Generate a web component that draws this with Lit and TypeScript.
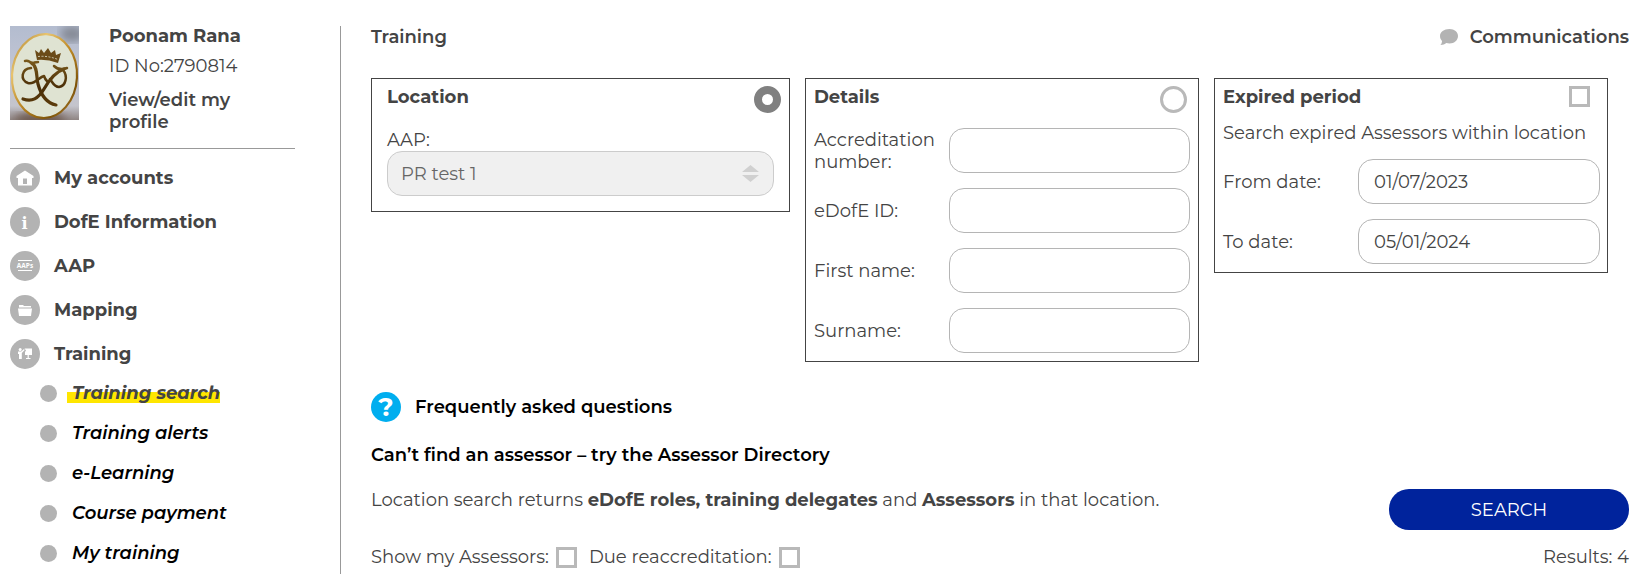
import { LitElement, html, css, svg } from "lit";
import { customElement, state } from "lit/decorators.js";

const sharedStyles = css`
  *,
  *::before,
  *::after {
    box-sizing: border-box;
  }
  a {
    color: inherit;
    text-decoration: none;
  }
  a:hover {
    text-decoration: underline;
  }
  h1,
  h2,
  p,
  ul {
    margin: 0;
    padding: 0;
  }
  ul {
    list-style: none;
  }
`;

const navIcons = {
  home: svg`<path d="M15 7.500 L23.500 13 V15 H22 V22.500 H8 V15 H6.500 V13 Z" fill="#fff" /><path d="M13 15.500h4v5.500h-4z" fill="#b3b3b3" />`,
  info: svg`<text x="14.500" y="21.500" text-anchor="middle" font-family="DejaVu Serif, serif" font-weight="700" font-size="16" fill="#fff">i</text>`,
  aap: svg`<path d="M8 9.500h14M8 19.500h14" stroke="#fff" stroke-width="1" /><text x="15" y="17.300" text-anchor="middle" font-family="Open Sans, sans-serif" font-weight="700" font-size="6.500" fill="#fff">AAPs</text>`,
  folder: svg`<path d="M9 10h4l1 1h7v1.500H9z" fill="#fff" /><path d="M8 13.500h14l-1 7.500H9z" fill="#fff" />`,
  training: svg`<circle cx="10.200" cy="10.600" r="1.500" fill="#fff" /><path d="M8 12.600h3.200l2.800-2.600 .7.900-2.900 3.100V20H9v-5H8z" fill="#fff" /><path d="M14.500 9.500h7.500v6.500h-3.200v3h1.700v1h-4.500v-1h1.600v-3h-2.600v-3l1-1.500z" fill="#fff" />`,
};

@customElement("side-nav")
class SideNav extends LitElement {
  static styles = [
    sharedStyles,
    css`
      :host {
        display: block;
        padding-right: 45px;
        border-right: 1px solid #999;
      }
      .profile {
        display: grid;
        grid-template-columns: 69px 1fr;
        column-gap: 30px;
        padding-bottom: 15px;
        border-bottom: 1px solid #999;
      }
      .photo {
        display: block;
        width: 69px;
        height: 94px;
      }
      .who {
        display: flex;
        flex-direction: column;
        padding-right: 50px;
      }
      .name {
        line-height: 20px;
        font-weight: 700;
      }
      .idno {
        padding: 10px 0 13px;
        line-height: 20px;
      }
      .edit {
        line-height: 22px;
        font-weight: 600;
      }
      .sections {
        display: grid;
        gap: 14px;
        padding-top: 14px;
      }
      .section {
        display: flex;
        align-items: center;
        gap: 14px;
        height: 30px;
        font-weight: 700;
      }
      .icon {
        display: block;
        width: 30px;
        height: 30px;
      }
      .pages {
        display: grid;
        gap: 16px;
        padding: 12px 0 0 30px;
        color: #000;
        font-weight: 600;
        font-style: italic;
      }
      .page {
        display: flex;
        align-items: center;
        gap: 10px;
        height: 24px;
      }
      .page::before {
        content: "";
        width: 17px;
        height: 17px;
        border-radius: 50%;
        background: #b3b3b3;
      }
      .page a {
        padding-left: 5px;
        line-height: 24px;
      }
      .page .current {
        color: #444;
        font-weight: 700;
        background: linear-gradient(#ffe600, #ffe600) 0 11px / 100% 11px no-repeat;
      }
    `,
  ];

  private sections = [
    { label: "My accounts", icon: navIcons.home },
    { label: "DofE Information", icon: navIcons.info },
    { label: "AAP", icon: navIcons.aap },
    { label: "Mapping", icon: navIcons.folder },
    { label: "Training", icon: navIcons.training },
  ];

  private pages = ["Training search", "Training alerts", "e-Learning", "Course payment", "My training"];

  private photo() {
    return html`<svg class="photo" viewBox="0 0 69 94" role="img" aria-label="Profile picture">
      <defs>
        <linearGradient id="backdrop" x1="0" y1="0" x2="0" y2="1">
          <stop offset="0" stop-color="#b3bccf" />
          <stop offset="0.5" stop-color="#c3c6d4" />
          <stop offset="0.85" stop-color="#c4c4cc" />
          <stop offset="1" stop-color="#8f8583" />
        </linearGradient>
        <linearGradient id="rim" x1="0" y1="0" x2="1" y2="1">
          <stop offset="0" stop-color="#a87a20" />
          <stop offset="0.25" stop-color="#e8c470" />
          <stop offset="0.5" stop-color="#c08c28" />
          <stop offset="0.8" stop-color="#7d5208" />
          <stop offset="1" stop-color="#c9983c" />
        </linearGradient>
        <linearGradient id="ink" gradientUnits="userSpaceOnUse" x1="0" y1="34" x2="0" y2="80">
          <stop offset="0" stop-color="#7a5a1c" />
          <stop offset="0.6" stop-color="#4a2e08" />
          <stop offset="1" stop-color="#5c3c0c" />
        </linearGradient>
        <filter id="soft"><feGaussianBlur stdDeviation="4" /></filter>
      </defs>
      <rect width="69" height="94" fill="url(#backdrop)" />
      <ellipse cx="62" cy="8" rx="12" ry="8" fill="#858a96" filter="url(#soft)" />
      <ellipse cx="30" cy="93" rx="26" ry="6" fill="#6b554a" filter="url(#soft)" />
      <g transform="rotate(3 34 50)">
        <ellipse cx="34.500" cy="50" rx="32.500" ry="42" fill="#dfe3d2" stroke="url(#rim)" stroke-width="2.200" />
      </g>
      <path d="M27 34 L25 24 L29 27 L31 23 L34 27 L38 22 L41 27 L45 24 L46 29 L51 27 L48 37 Q37 33 27 34Z" fill="#6b4b18" />
      <path d="M28 30.500q10-1 20 3" fill="none" stroke="#dfe3d2" stroke-width="0.800" stroke-dasharray="2 1.500" />
      <g fill="none" stroke="url(#ink)" stroke-linecap="round" stroke-linejoin="round">
        <path d="M15 35 Q19 34 22 38 Q24 36 28 36" stroke-width="2.500" />
        <path d="M22 37 C28 42 26 50 28 58 C31 69 36 77 46 79" stroke-width="3.200" />
        <path d="M21 42 C11 43 10 54 18 57 C25 59 29 51 34 50 Q35 53 37 55" stroke-width="2.500" />
        <path d="M44 40 Q49 45 57 42" stroke-width="2.500" />
        <path d="M54 43 C45 46 38 56 34 63 C28 73 22 76 13 73" stroke-width="3.200" />
        <path d="M53 44 C58 50 56 60 49 61 C44 61 43 57 40 53" stroke-width="2.500" />
      </g>
    </svg>`;
  }

  render() {
    return html`
      <div class="profile">
        ${this.photo()}
        <div class="who">
          <span class="name">Poonam Rana</span>
          <span class="idno">ID No:2790814</span>
          <a class="edit" href="#profile">View/edit my profile</a>
        </div>
      </div>
      <nav aria-label="Main">
        <ul class="sections">
          ${this.sections.map(
            (s) => html`<li>
              <a class="section" href="#">
                <svg class="icon" viewBox="0 0 30 30" aria-hidden="true">
                  <circle cx="15" cy="15" r="15" fill="#b3b3b3" />
                  ${s.icon}
                </svg>
                ${s.label}
              </a>
            </li>`
          )}
        </ul>
        <ul class="pages">
          ${this.pages.map(
            (p, i) => html`<li class="page"><a class=${i === 0 ? "current" : ""} href="#">${p}</a></li>`
          )}
        </ul>
      </nav>
    `;
  }
}

@customElement("training-search")
class TrainingSearch extends LitElement {
  static styles = [
    sharedStyles,
    css`
      :host {
        display: block;
        padding-left: 30px;
      }
      .top {
        display: flex;
        justify-content: space-between;
        align-items: center;
        height: 22px;
      }
      .heading {
        font-size: inherit;
        font-weight: 600;
      }
      .comms {
        display: flex;
        align-items: center;
        gap: 12px;
        font-weight: 600;
      }
      .bubble {
        width: 18px;
        height: 16px;
      }
      .panels {
        display: grid;
        grid-template-columns: 419fr 394fr 394fr;
        align-items: start;
        gap: 15px;
        padding: 30px 21px 30px 0;
      }
      .panel {
        padding: 7px 8px 8px;
        border: 1px solid #444;
      }
      .location {
        padding: 7px 15px 15px;
      }
      .location .bar {
        margin-right: -7px;
      }
      .bar {
        display: flex;
        justify-content: space-between;
        align-items: flex-start;
        height: 42px;
      }
      .details .bar {
        padding-right: 3px;
      }
      .expired {
        padding-right: 7px;
      }
      .expired .bar {
        height: 34px;
        padding-right: 10px;
      }
      .title {
        font-size: inherit;
        line-height: 22px;
        font-weight: 700;
      }
      .radio,
      .check {
        appearance: none;
        flex: none;
        margin: 0;
        border: 3px solid #b9b9b9;
        background: #fff;
      }
      .radio {
        width: 27px;
        height: 27px;
        border-radius: 50%;
      }
      .radio:checked {
        border: 8px solid #808080;
      }
      .check {
        width: 21px;
        height: 21px;
      }
      .check:checked {
        background: #808080;
      }
      .aap-label {
        display: block;
        padding-top: 1px;
        line-height: 22px;
      }
      .picker {
        display: grid;
        align-items: center;
      }
      .picker > * {
        grid-area: 1 / 1;
      }
      .select,
      .input {
        width: 100%;
        min-width: 0;
        height: 45px;
        border: 1px solid #b5b5b5;
        border-radius: 15px;
        background: #fff;
        color: #444;
        font: inherit;
        padding: 0 15px;
      }
      .select {
        appearance: none;
        padding: 0 13px;
        border-color: #ccc;
        background: #f0f0f0;
        color: #666;
        opacity: 1;
      }
      .arrows {
        justify-self: end;
        width: 17px;
        height: 17px;
        margin-right: 15px;
        pointer-events: none;
      }
      .rows {
        display: grid;
        gap: 15px;
      }
      .row {
        display: grid;
        grid-template-columns: 135px 1fr;
        align-items: center;
        line-height: 22px;
      }
      .note {
        padding: 2px 0 15px;
        line-height: 22px;
      }
      .strong {
        display: flex;
        align-items: center;
        gap: 14px;
        color: #000;
        font-weight: 600;
      }
      .faq {
        width: 30px;
        height: 30px;
      }
      .directory {
        padding-top: 22px;
        line-height: 22px;
      }
      .footer {
        display: grid;
        grid-template-columns: 1fr auto;
        grid-template-rows: 41px auto;
        row-gap: 16px;
        padding-top: 23px;
      }
      .summary {
        line-height: 22px;
      }
      .summary b {
        font-weight: 700;
      }
      .search {
        width: 240px;
        height: 41px;
        border: 0;
        border-radius: 20px;
        background: #00239c;
        color: #fff;
        font: inherit;
      }
      .filters {
        display: flex;
        align-items: center;
        gap: 12px;
        line-height: 22px;
      }
      .filter {
        display: flex;
        align-items: center;
        gap: 7px;
      }
      .results {
        justify-self: end;
        line-height: 22px;
      }
    `,
  ];

  @state() private mode = "location";

  private details = ["Accreditation number:", "eDofE ID:", "First name:", "Surname:"];

  private dates = [
    { label: "From date:", value: "01/07/2023" },
    { label: "To date:", value: "05/01/2024" },
  ];

  private modeRadio(value: string, label: string) {
    return html`<input
      class="radio"
      type="radio"
      name="mode"
      aria-label=${label}
      .checked=${this.mode === value}
      @change=${() => (this.mode = value)}
    />`;
  }

  render() {
    return html`
      <header class="top">
        <h1 class="heading">Training</h1>
        <a class="comms" href="#communications">
          <svg class="bubble" viewBox="0 0 18 16" aria-hidden="true">
            <path d="M9.500 0C14.500 0 18 3 18 7s-3.500 7.500-8.500 7.500c-1.200 0-2.200-.2-3.200-.5C5 15.300 3 16 .300 16 1.500 15 2 13.500 2 12 .700 10.500 0 9 0 7 0 3 4 0 9.500 0z" fill="#b3b3b3" />
          </svg>
          Communications
        </a>
      </header>
      <div class="panels">
        <section class="panel location">
          <div class="bar">
            <h2 class="title">Location</h2>
            ${this.modeRadio("location", "Search by location")}
          </div>
          <label class="aap-label" for="aap">AAP:</label>
          <div class="picker">
            <select class="select" id="aap" disabled>
              <option>PR test 1</option>
            </select>
            <svg class="arrows" viewBox="0 0 17 17" aria-hidden="true">
              <path d="M8.500 0L17 7H0zM8.500 17L17 10H0z" fill="#d0d0d0" />
            </svg>
          </div>
        </section>
        <section class="panel details">
          <div class="bar">
            <h2 class="title">Details</h2>
            ${this.modeRadio("details", "Search by details")}
          </div>
          <div class="rows">
            ${this.details.map(
              (label, i) => html`<div class="row">
                <label for="detail-${i}">${label}</label>
                <input class="input" id="detail-${i}" type="text" />
              </div>`
            )}
          </div>
        </section>
        <section class="panel expired">
          <div class="bar">
            <h2 class="title">Expired period</h2>
            <input class="check" type="checkbox" aria-label="Search expired period" />
          </div>
          <p class="note">Search expired Assessors within location</p>
          <div class="rows">
            ${this.dates.map(
              (d, i) => html`<div class="row">
                <label for="date-${i}">${d.label}</label>
                <input class="input" id="date-${i}" type="text" .value=${d.value} />
              </div>`
            )}
          </div>
        </section>
      </div>
      <a class="strong" href="#faq">
        <svg class="faq" viewBox="0 0 30 30" aria-hidden="true">
          <circle cx="15" cy="15" r="15" fill="#00aeef" />
          <text x="15" y="24" text-anchor="middle" font-family="Montserrat, sans-serif" font-weight="700" font-size="26" fill="#fff">?</text>
        </svg>
        Frequently asked questions
      </a>
      <a class="strong directory" href="#directory">Can’t find an assessor – try the Assessor Directory</a>
      <div class="footer">
        <p class="summary">
          Location search returns <b>eDofE roles, training delegates</b> and <b>Assessors</b> in that location.
        </p>
        <button class="search" type="button">SEARCH</button>
        <div class="filters">
          <label class="filter">Show my Assessors: <input class="check" type="checkbox" /></label>
          <label class="filter">Due reaccreditation: <input class="check" type="checkbox" /></label>
        </div>
        <p class="results">Results: 4</p>
      </div>
    `;
  }
}

@customElement("app-root")
class AppRoot extends LitElement {
  static styles = css`
    :host {
      box-sizing: border-box;
      display: grid;
      grid-template-columns: 331px minmax(0, 1fr);
      min-height: 100vh;
      padding: 26px 11px 0 10px;
      background: #fff;
      color: #444;
      font-family: Montserrat, Inter, "Open Sans", sans-serif;
      font-size: 18px;
      font-weight: 400;
      line-height: 20px;
    }
  `;

  render() {
    return html`<side-nav></side-nav><training-search></training-search>`;
  }
}
